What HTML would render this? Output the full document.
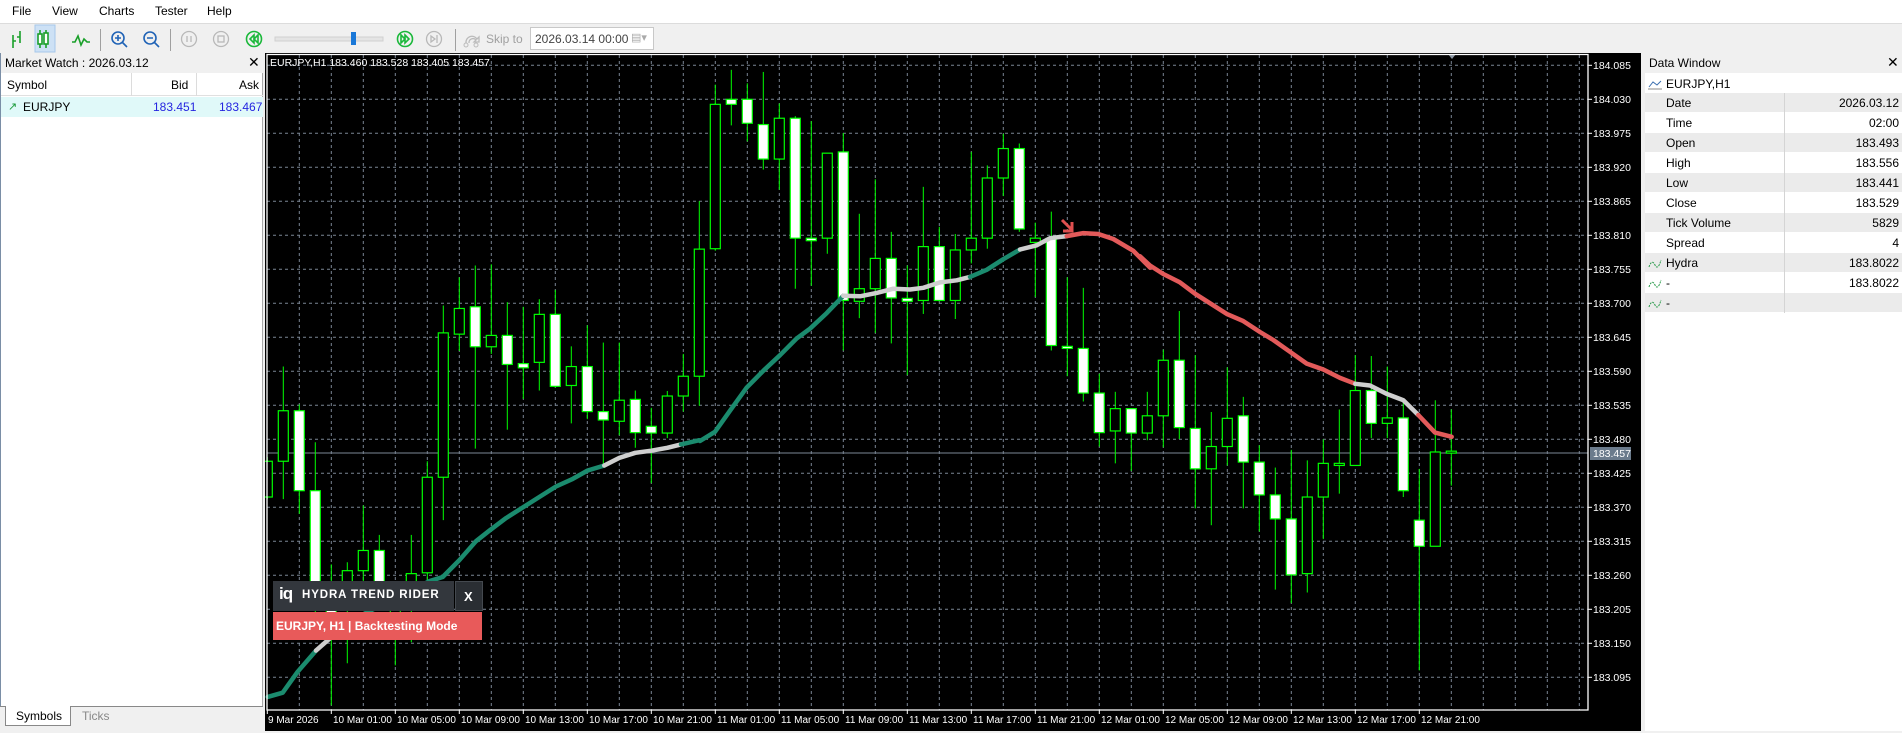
<!DOCTYPE html>
<html><head><meta charset="utf-8"><style>
*{margin:0;padding:0;box-sizing:border-box}
body{width:1902px;height:733px;overflow:hidden;background:#f0f0f0;font-family:"Liberation Sans",sans-serif;font-size:12px;color:#000;position:relative}
.abs{position:absolute;white-space:nowrap}
#menu{left:0;top:0;width:1902px;height:23px;background:#fff}
#menu span{position:absolute;top:4px;font-size:12px}
#tb{left:0;top:23px;width:1902px;height:30px;background:#f0f0f0;border-top:1px solid #dcdcdc}
.sep{position:absolute;top:5px;width:1px;height:22px;background:#a0a0a0}
#lp{left:0;top:53px;width:263px;height:654px;background:#fff;border-right:1px solid #a8a8a8;border-left:1px solid #7a8ea6}
#dw{left:1645px;top:53px;width:257px;height:678px;background:#fff}
.row{position:absolute;left:0;width:257px;height:20px;border-bottom:1px solid #fff}
.row .l{position:absolute;left:21px;top:3px}
.row .v{position:absolute;right:3px;top:3px}
.row .c{position:absolute;left:139px;top:0;width:1px;height:20px;background:#d4d4d4}
.g{background:#ebebeb}
</style></head><body>
<div id="menu" class="abs"><span style="left:12px">File</span><span style="left:52px">View</span><span style="left:99px">Charts</span><span style="left:155px">Tester</span><span style="left:207px">Help</span></div>
<div id="tb" class="abs">
<svg class="abs" style="left:0;top:0" width="700" height="30">
<g stroke="#1aa02a" stroke-width="1.6" fill="none">
<path d="M13 11v13M13 17h3M20 7v12M20 13h-3"/>
<rect x="35" y="1" width="20" height="27" fill="#cde1f5" stroke="#a6c8ea" stroke-width="1"/>
<path d="M40 6v18M46 6v18"/><rect x="38" y="10" width="4" height="10" fill="#fff"/><rect x="44" y="9" width="4" height="11" fill="#fff"/>
<path d="M72 18l3 0 3-6 3 9 3-6 3 3 3 0"/>
</g>
<g stroke="#2063b6" stroke-width="1.6" fill="none">
<circle cx="118" cy="14" r="6"/><path d="M115 14h6M118 11v6M122 18l5 5"/>
<circle cx="150" cy="14" r="6"/><path d="M147 14h6M154 18l5 5"/>
</g>
<g stroke="#b8b8b8" stroke-width="1.3" fill="none">
<circle cx="189" cy="15" r="7.5"/><path d="M187 12v6M191 12v6"/>
<circle cx="221" cy="15" r="7.5"/><rect x="218" y="12" width="6" height="6"/>
<circle cx="434" cy="15" r="7.5"/><path d="M431 12l4 3-4 3zM437 11v8"/>
</g>
<g stroke="#1ab83a" stroke-width="1.6" fill="none">
<circle cx="254" cy="15" r="7.5"/><path d="M254 11l-4 4 4 4zM258 11l-4 4 4 4z"/>
<circle cx="405" cy="15" r="7.5"/><path d="M401 11l4 4-4 4zM405 11l4 4-4 4z"/>
</g>
<rect x="275" y="13" width="108" height="4" fill="#e4e4e4" stroke="#d0d0d0"/>
<rect x="351" y="8" width="5" height="13" fill="#1a78d8"/>
<path d="M466 19a6 6 0 0 1 11-4l2-2v5h-5l2-2a4 4 0 0 0-7 3" fill="none" stroke="#bbb" stroke-width="1.3"/>
<circle cx="466" cy="21" r="2" fill="none" stroke="#bbb"/><circle cx="476" cy="21" r="2" fill="none" stroke="#bbb"/>
</svg>
<div class="sep" style="left:100px"></div><div class="sep" style="left:170px"></div><div class="sep" style="left:455px"></div>
<span class="abs" style="left:486px;top:8px;color:#a0a0a0">Skip to</span>
<div class="abs" style="left:530px;top:3px;width:124px;height:23px;border:1px solid #c8c8c8;background:#fff"><span class="abs" style="left:4px;top:4px;color:#444">2026.03.14 00:00</span><span class="abs" style="left:100px;top:3px;color:#aaa;font-size:11px">▤▾</span></div>
</div>
<div id="lp" class="abs">
<div class="abs" style="left:0;top:0;width:262px;height:20px;background:#f0f0f0"></div>
<span class="abs" style="left:4px;top:3px">Market Watch : 2026.03.12</span><span class="abs" style="left:247px;top:1px;font-size:14px">✕</span>
<div class="abs" style="left:0;top:20px;width:262px;height:23px;border-bottom:1px solid #e0e0e0"></div>
<div class="abs" style="left:130px;top:20px;width:1px;height:23px;background:#dcdcdc"></div>
<div class="abs" style="left:195px;top:20px;width:1px;height:23px;background:#dcdcdc"></div>
<span class="abs" style="left:6px;top:25px">Symbol</span><span class="abs" style="left:170px;top:25px">Bid</span><span class="abs" style="left:238px;top:25px">Ask</span>
<div class="abs" style="left:0;top:44px;width:262px;height:20px;background:#e0f9f9"></div>
<span class="abs" style="left:7px;top:47px;color:#1a9a3a;font-size:11px">↗</span><span class="abs" style="left:22px;top:47px">EURJPY</span>
<span class="abs" style="left:152px;top:47px;color:#2525e0">183.451</span><span class="abs" style="left:218px;top:47px;color:#2525e0">183.467</span>
</div>
<div class="abs" style="left:0;top:706px;width:263px;height:1px;background:#888"></div>
<div class="abs" style="left:5px;top:706px;width:66px;height:20px;background:#fff;border:1px solid #888;border-top:none"><span class="abs" style="left:10px;top:3px">Symbols</span></div>
<span class="abs" style="left:82px;top:709px;color:#888">Ticks</span>

<svg class="abs" style="left:265px;top:53px" width="1376" height="678" viewBox="265 53 1376 678" id="ch">
<rect x="265" y="53" width="1376" height="678" fill="#000"/>
<g id="grid" stroke="#7b8594" stroke-width="1" stroke-dasharray="3,3"></g>
<line x1="267" y1="453" x2="1588" y2="453" stroke="#7b8796"/>
<g id="cd"></g>
<g id="ind" fill="none" stroke-width="4.5" stroke-linecap="round" stroke-linejoin="round"></g>
<path d="M1062 220l10 10M1072 222v9h-9" stroke="#e05050" stroke-width="3" fill="none"/>
<path d="M1448 54h8l-4 5z" fill="#8b96a3"/>
<path d="M267 54.5H1588V710H267z" fill="none" stroke="#fff" stroke-width="1.3"/>
<g id="tk" stroke="#fff"></g>
<rect x="1590" y="447" width="41" height="13" fill="#6b7b8c"/>
<g fill="#fff" font-family="Liberation Sans,sans-serif" font-size="10.5">
<text x="270" y="66">EURJPY,H1  183.460 183.528 183.405 183.457</text>
<text x="1593" y="69">184.085</text><text x="1593" y="103">184.030</text><text x="1593" y="137">183.975</text><text x="1593" y="171">183.920</text><text x="1593" y="205">183.865</text><text x="1593" y="239">183.810</text><text x="1593" y="273">183.755</text><text x="1593" y="307">183.700</text><text x="1593" y="341">183.645</text><text x="1593" y="375">183.590</text><text x="1593" y="409">183.535</text><text x="1593" y="443">183.480</text><text x="1593" y="457">183.457</text><text x="1593" y="477">183.425</text><text x="1593" y="511">183.370</text><text x="1593" y="545">183.315</text><text x="1593" y="579">183.260</text><text x="1593" y="613">183.205</text><text x="1593" y="647">183.150</text><text x="1593" y="681">183.095</text>
</g>
<g fill="#fff" font-family="Liberation Sans,sans-serif" font-size="10">
<text x="268" y="723">9 Mar 2026</text><text x="333" y="723">10 Mar 01:00</text><text x="397" y="723">10 Mar 05:00</text><text x="461" y="723">10 Mar 09:00</text><text x="525" y="723">10 Mar 13:00</text><text x="589" y="723">10 Mar 17:00</text><text x="653" y="723">10 Mar 21:00</text><text x="717" y="723">11 Mar 01:00</text><text x="781" y="723">11 Mar 05:00</text><text x="845" y="723">11 Mar 09:00</text><text x="909" y="723">11 Mar 13:00</text><text x="973" y="723">11 Mar 17:00</text><text x="1037" y="723">11 Mar 21:00</text><text x="1101" y="723">12 Mar 01:00</text><text x="1165" y="723">12 Mar 05:00</text><text x="1229" y="723">12 Mar 09:00</text><text x="1293" y="723">12 Mar 13:00</text><text x="1357" y="723">12 Mar 17:00</text><text x="1421" y="723">12 Mar 21:00</text>
</g>
</svg>

<div class="abs" style="left:273px;top:581px;width:181px;height:30px;background:#33373d"><span class="abs" style="left:6px;top:3px;color:#fff;font-weight:bold;font-size:17px;letter-spacing:-1px">iq</span><span class="abs" style="left:29px;top:8px;color:#fff;font-weight:bold;font-size:11.5px;letter-spacing:0.9px">HYDRA TREND RIDER</span></div>
<div class="abs" style="left:455px;top:581px;width:28px;height:30px;background:#2a2e33;border:1px solid #44494f"><span class="abs" style="left:8px;top:7px;color:#fff;font-weight:bold;font-size:13px">X</span></div>
<div class="abs" style="left:273px;top:612px;width:209px;height:28px;background:#e85a5a"><span class="abs" style="left:3px;top:7px;color:#fff;font-weight:bold;font-size:12px">EURJPY, H1 | Backtesting Mode</span></div>

<div id="dw" class="abs">
<div class="abs" style="left:0;top:0;width:257px;height:20px;background:#f0f0f0"></div>
<span class="abs" style="left:4px;top:3px">Data Window</span><span class="abs" style="left:242px;top:1px;font-size:14px">✕</span>
<svg class="abs" style="left:3px;top:25px" width="14" height="12"><path d="M1 9l4-5 4 3 4-4" fill="none" stroke="#3a6fb0"/><path d="M0 11h14" stroke="#888"/></svg>
<span class="abs" style="left:21px;top:24px">EURJPY,H1</span>
<div class="row g" style="top:40px"><div class="c"></div><span class="l">Date</span><span class="v">2026.03.12</span></div>
<div class="row" style="top:60px;background:#fff"><div class="c"></div><span class="l">Time</span><span class="v">02:00</span></div>
<div class="row g" style="top:80px"><div class="c"></div><span class="l">Open</span><span class="v">183.493</span></div>
<div class="row" style="top:100px"><div class="c"></div><span class="l">High</span><span class="v">183.556</span></div>
<div class="row g" style="top:120px"><div class="c"></div><span class="l">Low</span><span class="v">183.441</span></div>
<div class="row" style="top:140px"><div class="c"></div><span class="l">Close</span><span class="v">183.529</span></div>
<div class="row g" style="top:160px"><div class="c"></div><span class="l">Tick Volume</span><span class="v">5829</span></div>
<div class="row" style="top:180px"><div class="c"></div><span class="l">Spread</span><span class="v">4</span></div>
<div class="row g" style="top:200px"><div class="c"></div><svg class="abs" style="left:3px;top:4px" width="14" height="12"><path d="M1 10c2-6 4-6 6-2s4 2 6-5" fill="none" stroke="#2a9a4a" stroke-dasharray="2,1"/></svg><span class="l">Hydra</span><span class="v">183.8022</span></div>
<div class="row" style="top:220px"><div class="c"></div><svg class="abs" style="left:3px;top:4px" width="14" height="12"><path d="M1 10c2-6 4-6 6-2s4 2 6-5" fill="none" stroke="#2a9a4a" stroke-dasharray="2,1"/></svg><span class="l">-</span><span class="v">183.8022</span></div>
<div class="row g" style="top:240px"><div class="c"></div><svg class="abs" style="left:3px;top:4px" width="14" height="12"><path d="M1 10c2-6 4-6 6-2s4 2 6-5" fill="none" stroke="#2a9a4a" stroke-dasharray="2,1"/></svg><span class="l">-</span></div>
</div>

<script>
var NS="http://www.w3.org/2000/svg";
function el(p,t,a){var e=document.createElementNS(NS,t);for(var k in a)e.setAttribute(k,a[k]);p.appendChild(e);return e;}
var g=document.getElementById('grid');
for(var k=0;k<19;k++){var y=65.3+34*k;el(g,'line',{x1:267,x2:1588,y1:y,y2:y});}
for(var x=299.3;x<1588;x+=32){el(g,'line',{x1:x,x2:x,y1:55,y2:710});}
var tk=document.getElementById('tk');
for(var k=0;k<19;k++){var y=65.3+34*k;el(tk,'line',{x1:1588,x2:1592,y1:y,y2:y});}
for(var k=0;k<19;k++){var x=267.3+64*k;el(tk,'line',{x1:x,x2:x,y1:710,y2:714});}
function Y(v){return 53+v/2.376;}
var C=[[0,970,1055,960,1060,0],[1,850,970,745,1060,0],[2,850,1040,835,1095,1],[3,1040,1300,925,1330,1],[4,1300,1340,1215,1550,1],[5,1230,1300,1210,1450,0],[6,1182,1230,1075,1260,0],[7,1182,1290,1145,1320,1],[8,1320,1350,1300,1455,0],[9,1237,1260,1145,1400,0],[10,1008,1235,970,1260,0],[11,665,1008,600,1110,0],[12,607,668,533,708,0],[13,603,698,505,940,1],[14,671,698,502,715,0],[15,671,740,592,895,1],[16,738,748,603,822,1],[17,621,735,585,802,0],[18,621,792,563,795,1],[19,745,790,697,880,0],[20,745,852,647,870,1],[21,852,872,688,985,1],[22,825,875,688,908,0],[23,823,902,802,938,1],[24,887,903,843,1022,1],[25,815,903,803,915,0],[26,768,815,715,852,0],[27,466,768,352,838,0],
[28,122,465,75,470,0],[29,110,122,40,172,1],[30,110,167,72,210,1],[31,170,252,45,277,1],[32,155,252,120,325,0],[33,155,440,150,560,1],[34,440,446,162,553,1],[35,238,440,238,477,0],[36,235,588,190,707,1],[37,560,590,382,630,0],[38,488,560,300,665,0],[39,488,582,425,690,1],[40,583,590,505,765,1],[41,460,588,318,620,0],[42,460,588,413,590,1],[43,468,588,430,632,0],[44,440,468,235,500,0],[45,297,440,267,465,0],[46,227,297,192,340,0],[47,227,418,215,425,1],[48,440,450,403,580,0],[49,440,695,377,707,1],[50,697,702,533,768,1],[51,702,808,558,828,1],[52,808,902,762,935,1],[53,845,898,805,975,0],[54,845,903,845,993,1],[55,862,903,805,920,0],
[56,730,862,705,937,0],[57,730,890,613,917,1],[58,892,988,718,1082,1],[59,935,988,853,1122,0],[60,868,935,747,980,0],[61,862,972,817,1082,1],[62,972,1050,932,1137,1],[63,1050,1107,985,1275,1],[64,1107,1240,943,1307,1],[65,1055,1237,968,1282,0],[66,975,1055,918,1155,0],[67,975,980,847,1047,0],[68,802,980,718,980,0],[69,802,880,720,915,1],[70,867,880,745,915,0],[71,867,1040,820,1055,1],[72,1110,1172,988,1467,1],[73,948,1172,825,1172,0],[74,946,950,847,1028,0]];
var cd=document.getElementById('cd');
C.forEach(function(c){var x=267.3+16*c[0];
el(cd,'line',{x1:x,x2:x,y1:Y(c[3]),y2:Y(c[4]),stroke:'#00ff00','stroke-width':1});
var t=Y(c[1]),b=Y(c[2]);if(b-t<2)b=t+2;
el(cd,'rect',{x:x-5,y:t,width:10,height:b-t,fill:c[5]?'#fff':'#000',stroke:'#00ff00','stroke-width':1.2});});
function P(o,a){return a.map(function(p){return (o+p[0]/3).toFixed(1)+','+Y(p[1]).toFixed(1);}).join(' ');}
var G='#1b8b6e',W='#cfcfcf',R='#e35a5a';
var S=[[266,G,[[5,1530],[50,1520],[95,1470],[150,1420]]],[266,W,[[150,1420],[200,1385],[250,1350]]],
[266,G,[[250,1350],[490,1255],[530,1245],[580,1205],[630,1160],[670,1135],[720,1105],[770,1080],[820,1055],[870,1030],[920,1012],[965,992],[1015,980]]],
[266,W,[[1015,980],[1060,962],[1108,950],[1156,945],[1204,938],[1245,930]]],
[266,G,[[1245,930],[1300,920]]],
[700,G,[[0,922],[45,900],[90,850],[140,795],[190,755],[240,718],[290,678],[330,655],[380,618],[430,577]]],
[700,W,[[430,577],[480,578],[530,570],[580,560],[630,562],[670,558],[720,545],[770,540],[810,532]]],
[700,G,[[810,532],[860,515],[910,490],[960,467]]],
[700,W,[[960,467],[1010,457],[1050,440],[1100,435]]],
[700,R,[[1100,435],[1150,428],[1195,430],[1240,442],[1300,470],[1350,510]]],
[1140,R,[[0,483],[30,505],[70,525],[120,545],[165,572],[215,597],[260,620],[310,637],[360,663],[400,682],[450,710],[500,738],[550,752],[600,772],[646,786]]],
[1140,W,[[646,786],[690,790],[740,810],[790,825],[835,860]]],
[1140,R,[[835,860],[885,902],[935,912]]]];
var ind=document.getElementById('ind');
S.forEach(function(s){el(ind,'polyline',{points:P(s[0],s[2]),stroke:s[1]});});
</script>
</body></html>
